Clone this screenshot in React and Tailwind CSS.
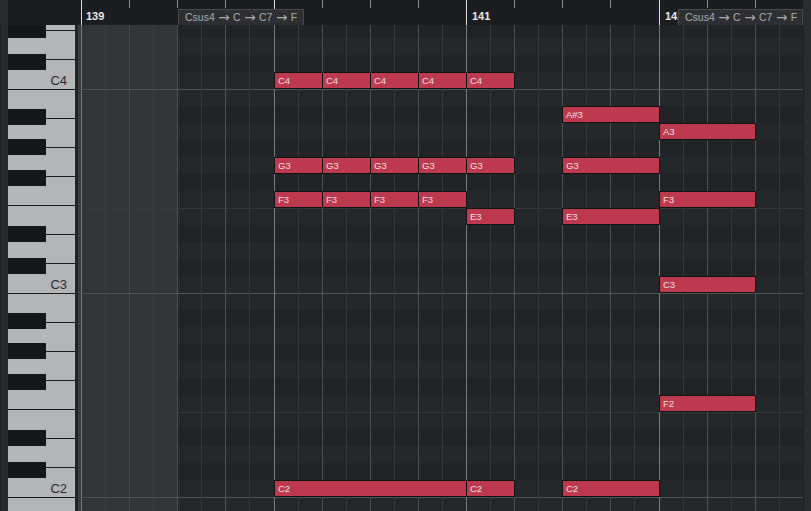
import React from 'react';

// piano roll geometry (measured off the screenshot)
const BEAT = 48.125;
const EIGHTH = BEAT / 2;
const ROW = 17;
const GRID_W = 722;
const GRID_H = 486;
const PART_X = 97; // where the part starts (bar 139, beat 3)

const isBlack = (p) => [1, 3, 6, 8, 10].includes(((p % 12) + 12) % 12);
const rowTop = (p) => 47 + (60 - p) * ROW;

const notes = [
  // C4
  { p: 60, j: 4, len: 1, label: 'C4' },
  { p: 60, j: 5, len: 1, label: 'C4' },
  { p: 60, j: 6, len: 1, label: 'C4' },
  { p: 60, j: 7, len: 1, label: 'C4' },
  { p: 60, j: 8, len: 1, label: 'C4' },
  // A#3 / A3
  { p: 58, j: 10, len: 2, label: 'A#3' },
  { p: 57, j: 12, len: 2, label: 'A3' },
  // G3
  { p: 55, j: 4, len: 1, label: 'G3' },
  { p: 55, j: 5, len: 1, label: 'G3' },
  { p: 55, j: 6, len: 1, label: 'G3' },
  { p: 55, j: 7, len: 1, label: 'G3' },
  { p: 55, j: 8, len: 1, label: 'G3' },
  { p: 55, j: 10, len: 2, label: 'G3' },
  // F3
  { p: 53, j: 4, len: 1, label: 'F3' },
  { p: 53, j: 5, len: 1, label: 'F3' },
  { p: 53, j: 6, len: 1, label: 'F3' },
  { p: 53, j: 7, len: 1, label: 'F3' },
  { p: 53, j: 12, len: 2, label: 'F3' },
  // E3
  { p: 52, j: 8, len: 1, label: 'E3' },
  { p: 52, j: 10, len: 2, label: 'E3' },
  // C3, F2, C2
  { p: 48, j: 12, len: 2, label: 'C3' },
  { p: 41, j: 12, len: 2, label: 'F2' },
  { p: 36, j: 4, len: 4, label: 'C2' },
  { p: 36, j: 8, len: 1, label: 'C2' },
  { p: 36, j: 10, len: 2, label: 'C2' },
];

const pitches = [];
for (let p = 35; p <= 64; p++) pitches.push(p);

const vLines = [];
for (let i = 0; i <= 30; i++) vLines.push(i);

const GridLines = () => (
  <svg width={GRID_W} height={GRID_H} className="block" shapeRendering="crispEdges">
    <rect x={0} y={0} width={PART_X} height={GRID_H} fill="#333438" />
    {pitches.map((p) => (
      <rect
        key={p}
        x={PART_X}
        y={rowTop(p)}
        width={GRID_W - PART_X}
        height={ROW}
        fill={isBlack(p) ? '#212326' : '#25282b'}
      />
    ))}
    {pitches
      .filter((p) => p % 12 === 0 || p % 12 === 5)
      .map((p) => (
        <rect
          key={'h' + p}
          x={0}
          y={rowTop(p) + ROW}
          width={GRID_W}
          height={1}
          fill={p % 12 === 0 ? '#4f5256' : '#36393c'}
        />
      ))}
    {vLines.map((i) => {
      const x = Math.floor(0.5 + i * EIGHTH);
      let c = '#35383b';
      if (i % 8 === 0) c = '#76787c';
      else if (i % 2 === 0) c = '#4d5054';
      if (i < 4 && i % 8 !== 0) c = i % 2 === 0 ? '#46484c' : '#3c3d41';
      return <rect key={'v' + i} x={x} y={0} width={1} height={GRID_H} fill={c} />;
    })}
  </svg>
);

const blackKeys = [
  [-35, 16],
  [-67, 16],
  [-123, 16],
  [-154, 16],
  [-184, 16],
];

// C key bottoms in body coordinates (screen y - 25)
const octaves = [
  { bottom: 64, label: 'C4' },
  { bottom: 268, label: 'C3' },
  { bottom: 472, label: 'C2' },
];

const Keyboard = () => (
  <svg width={67} height={GRID_H} className="block" shapeRendering="crispEdges">
    <rect x={0} y={0} width={67} height={GRID_H} fill="#b4b5b7" />
    {octaves.map((o) => (
      <g key={o.label}>
        {[0, 1, 2, 3, 4, 5, 6].map((k) => {
          const y = Math.floor(o.bottom - k * 29.14);
          const full = k === 0 || k === 3;
          return (
            <rect
              key={k}
              x={full ? 0 : 38}
              y={y}
              width={full ? 67 : 29}
              height={1}
              fill="#1b1c1e"
            />
          );
        })}
        {blackKeys.map(([off, h]) => (
          <rect key={off} x={0} y={o.bottom + off} width={38} height={h} fill="#161719" />
        ))}
        <text
          x={59}
          y={o.bottom - 4.5}
          textAnchor="end"
          fontFamily="'Liberation Sans', Arial, sans-serif"
          fontSize="13"
          fill="#2a2b2e"
        >
          {o.label}
        </text>
      </g>
    ))}
  </svg>
);

const RulerTicks = () => (
  <svg width={GRID_W} height={25} className="block" shapeRendering="crispEdges">
    {[...Array(16)].map((_, j) => {
      const x = Math.floor(0.5 + j * BEAT);
      const bar = j % 4 === 0;
      return (
        <rect
          key={j}
          x={x}
          y={0}
          width={1}
          height={bar ? 25 : 8}
          fill={bar ? '#d9dadc' : '#8a8c90'}
        />
      );
    })}
  </svg>
);

const chordSteps = ['Csus4', 'C', 'C7', 'F'];

const ChordBox = ({ left, width }) => (
  <div
    className="absolute top-[9px] h-[16px] bg-[#2d2f32] border-t border-l border-r border-[#47494d] flex items-center gap-[3.5px] pl-[6px] text-[10.5px] leading-none text-[#a9abae] whitespace-nowrap overflow-hidden"
    style={{ left, width }}
  >
    {chordSteps.map((c, i) => (
      <React.Fragment key={c}>
        {i > 0 && (
          <span className="font-['DejaVu_Sans',sans-serif] text-[13.5px] leading-none">→</span>
        )}
        <span>{c}</span>
      </React.Fragment>
    ))}
  </div>
);

export default function App() {
  return (
    <div
      className="w-[811px] h-[511px] overflow-hidden bg-[#1c1d21] flex flex-col select-none"
      style={{ fontFamily: "'Liberation Sans', Arial, sans-serif" }}
    >
      {/* ruler row */}
      <div className="flex h-[25px] shrink-0">
        <div className="w-[8px] bg-[#292a2d]" />
        <div className="w-[73px] bg-[#1c1d21]" />
        <div className="relative w-[722px] bg-[#1c1d21]">
          <RulerTicks />
          <span className="absolute left-[5px] top-[11px] text-[11px] font-bold leading-none text-[#e8e8e8]">
            139
          </span>
          <span className="absolute left-[391px] top-[11px] text-[11px] font-bold leading-none text-[#e8e8e8]">
            141
          </span>
          <span className="absolute left-[584px] top-[11px] text-[11px] font-bold leading-none text-[#e8e8e8]">
            142
          </span>
          <ChordBox left={97} width={126} />
          <ChordBox left={597} width={125} />
        </div>
        <div className="w-[8px] bg-[#2b2c2f]" />
      </div>

      {/* editor body */}
      <div className="flex h-[486px]">
        <div className="w-[8px] bg-[#292a2d] border-l border-[#1f2022]" />
        <div className="w-[67px]">
          <Keyboard />
        </div>
        <div className="w-[6px] flex">
          <div className="w-[3px] bg-[#232427]" />
          <div className="w-[3px] bg-[#3a3b3f]" />
        </div>
        <div className="relative w-[722px]">
          <GridLines />
          {notes.map((n, idx) => {
            const left = Math.round(n.j * BEAT);
            const width = Math.round((n.j + n.len) * BEAT) - left + 1;
            return (
              <div
                key={idx}
                className="absolute h-[17px] bg-[#bd3a4e] border border-[#111214] flex items-center pl-[3px] text-[9.5px] leading-none text-[#f6dfe3] whitespace-nowrap overflow-hidden"
                style={{ left, top: rowTop(n.p), width }}
              >
                {n.label}
              </div>
            );
          })}
        </div>
        <div className="w-[8px] bg-[#2b2c2f] border-l border-[#1f2022]" />
      </div>
    </div>
  );
}
